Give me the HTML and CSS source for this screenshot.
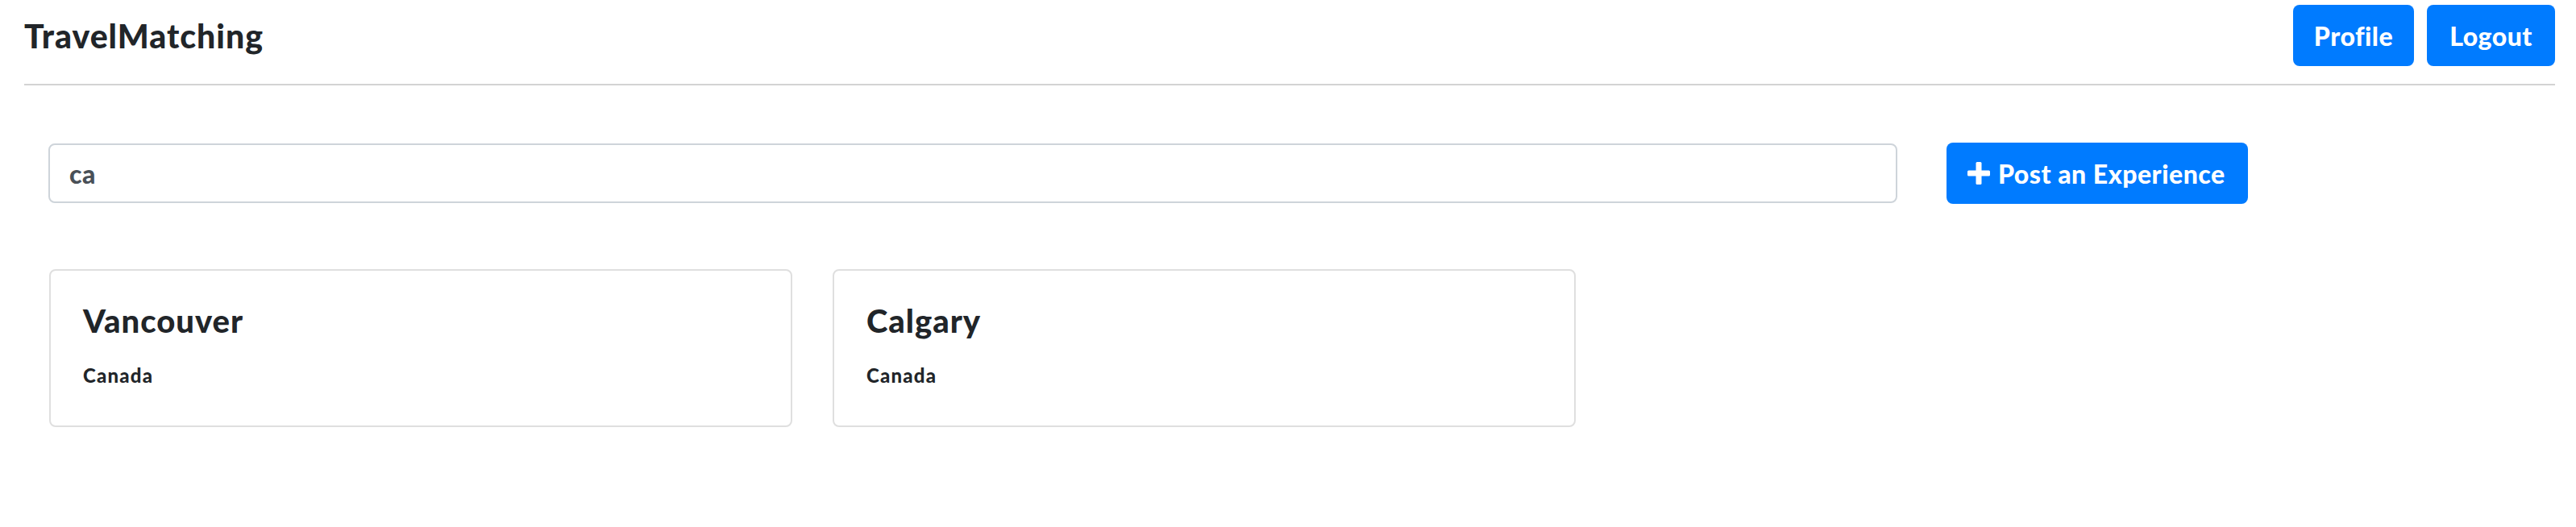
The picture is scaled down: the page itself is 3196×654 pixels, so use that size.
FILE: index.html
```html
<!DOCTYPE html>
<html lang="en">
<head>
    <meta charset="UTF-8">
    <meta name="viewport" content="width=device-width, initial-scale=1.0">
    <title>TravelMatching</title>
    <link rel="stylesheet" href="styles.css">
</head>
<body>
    <div class="header">
        <div class="brand">TravelMatching</div>
        <div class="nav-buttons">
            <button class="btn btn-profile">Profile</button>
            <button class="btn btn-logout">Logout</button>
        </div>
    </div>

    <div class="search-row">
        <input class="search-input" type="text" value="ca">
        <button class="btn btn-post">
            <svg class="plus-icon" width="28" height="28" viewBox="0 0 28 28">
                <rect x="10.5" y="0" width="7" height="28" rx="1.5" fill="#fff"/>
                <rect x="0" y="10.5" width="28" height="7" rx="1.5" fill="#fff"/>
            </svg>
            Post an Experience
        </button>
    </div>

    <div class="cards">
        <div class="card">
            <div class="card-title">Vancouver</div>
            <div class="card-country">Canada</div>
        </div>
        <div class="card">
            <div class="card-title">Calgary</div>
            <div class="card-country">Canada</div>
        </div>
    </div>
</body>
</html>
```

FILE: styles.css
```css
body {
    margin: 0;
    font-family: Lato, "Noto Sans", sans-serif;
    color: #212529;
    background-color: white;
}
.header {
    display: flex;
    justify-content: space-between;
    align-items: center;
    margin: 0 26px 0 30px;
    padding: 6px 0 22px;
    border-bottom: 2px solid #d3d3d3;
}
.brand {
    font-size: 41px;
    font-weight: 900;
    letter-spacing: 1px;
    color: #212529;
}
.nav-buttons {
    display: flex;
    gap: 16px;
}
.btn {
    background-color: #007bff;
    color: white;
    border: none;
    border-radius: 8px;
    font-family: Lato, "Noto Sans", sans-serif;
    font-size: 32px;
    font-weight: 900;
    letter-spacing: 0.5px;
    height: 76px;
    cursor: pointer;
}
.btn-profile {
    width: 150px;
}
.btn-logout {
    width: 159px;
}
.search-row {
    display: flex;
    align-items: center;
    gap: 61px;
    margin-top: 71px;
    padding-left: 60px;
}
.search-input {
    width: 2294px;
    height: 74px;
    box-sizing: border-box;
    border: 2px solid #ced4da;
    border-radius: 8px;
    padding: 0 24px;
    font-family: Lato, "Noto Sans", sans-serif;
    font-size: 32px;
    font-weight: 900;
    letter-spacing: 0.5px;
    color: #495057;
}
.btn-post {
    display: flex;
    align-items: center;
    gap: 10px;
    width: 374px;
    padding: 0 0 0 26px;
}
.cards {
    display: flex;
    gap: 50px;
    margin-top: 81px;
    padding-left: 61px;
}
.card {
    width: 922px;
    height: 196px;
    box-sizing: border-box;
    border: 2px solid #dfdfdf;
    border-radius: 8px;
    padding: 38px 40px 0;
}
.card-title {
    font-size: 40px;
    font-weight: 900;
    letter-spacing: 1px;
    line-height: 48px;
    margin-bottom: 29px;
}
.card-country {
    font-size: 24px;
    font-weight: 900;
    letter-spacing: 1.2px;
    line-height: 29px;
}
```
